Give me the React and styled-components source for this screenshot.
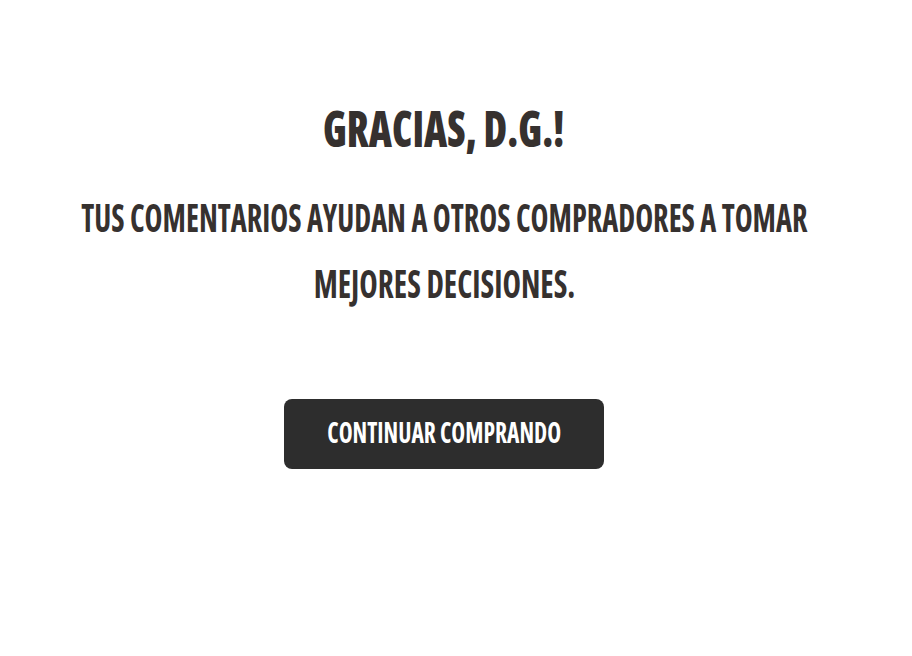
import styled, { createGlobalStyle } from 'styled-components';

const Global = createGlobalStyle`
  body {
    margin: 0;
    background: #fff;
    font-family: "Open Sans", "Liberation Sans", sans-serif;
  }
`;

const Page = styled.main`
  display: flex;
  flex-direction: column;
  align-items: center;
  padding: 99px 32px 0 8px;
`;

const Condensed = styled.span`
  display: inline-block;
  white-space: nowrap;
  transform: scaleX(${(p) => p.$sx || 0.8});
  transform-origin: center;
`;

const Title = styled.h1`
  margin: 0;
  font-size: 49px;
  line-height: 59px;
  font-weight: 800;
  font-stretch: 75%;
  color: #36312f;
  text-transform: uppercase;
`;

const Message = styled.p`
  margin: 26px 0 0;
  display: flex;
  flex-direction: column;
  align-items: center;
  font-size: 39px;
  line-height: 66px;
  font-weight: 700;
  font-stretch: 75%;
  color: #36312f;
  text-transform: uppercase;
`;

const Button = styled.button`
  margin-top: 83px;
  width: 320px;
  height: 70px;
  padding: 0 0 5px;
  border: 0;
  border-radius: 8px;
  background: #2d2d2d;
  color: #fff;
  font-family: inherit;
  font-size: 28px;
  font-weight: 700;
  font-stretch: 75%;
  text-transform: uppercase;
  cursor: pointer;
`;

export default function App() {
  return (
    <>
      <Global />
      <Page>
        <Title>
          <Condensed $sx={0.823}>Gracias, D.G.!</Condensed>
        </Title>
        <Message>
          <Condensed $sx={0.777}>Tus comentarios ayudan a otros compradores a tomar</Condensed>
          <Condensed $sx={0.8}>mejores decisiones.</Condensed>
        </Message>
        <Button>
          <Condensed $sx={0.84}>Continuar comprando</Condensed>
        </Button>
      </Page>
    </>
  );
}
